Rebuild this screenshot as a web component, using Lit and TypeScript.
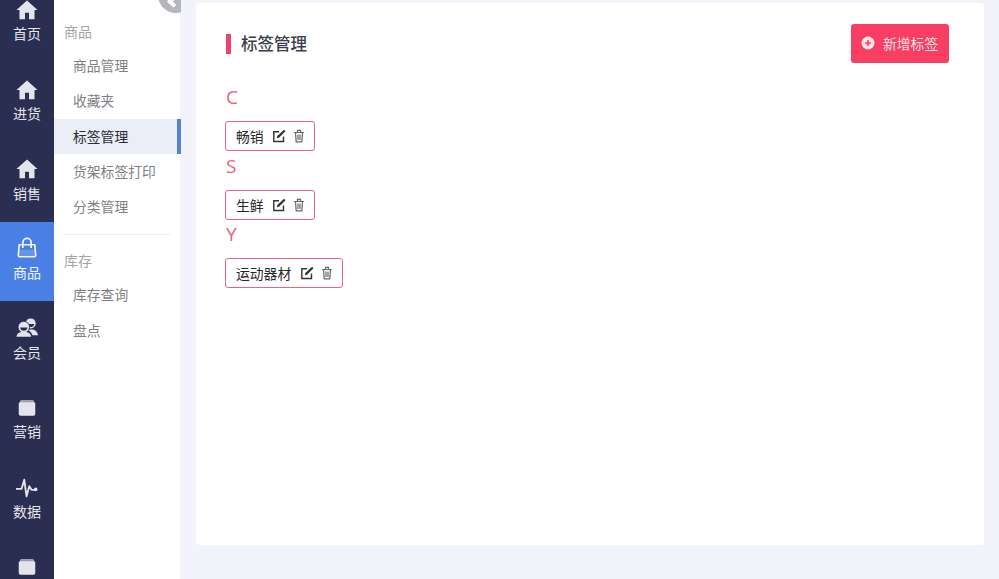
import { LitElement, html, css, svg } from "lit";
import { customElement } from "lit/decorators.js";

const FONT = css`"Noto Sans CJK SC", "Noto Sans", sans-serif`;

const home = svg`<path d="M12 1.500 .5 12h3.300V22h6v-7h4.400v7h6V12h3.300z"/>`;
const bag = svg`<path fill="currentColor" opacity=".18" d="M3 14h18v7H3z"/><path fill="none" stroke="currentColor" stroke-width="1.800" stroke-linejoin="round" d="M3.500 8.500h17l1 11.500a1.500 1.500 0 0 1-1.500 1.500H4A1.500 1.500 0 0 1 2.500 20z"/><path fill="none" stroke="currentColor" stroke-width="1.800" d="M7.500 12V6a4.500 4.500 0 0 1 9 0v6"/>`;
const members = svg`<circle cx="16" cy="7" r="5.500"/><path fill="#2a2f52" d="M12.200 7.500h7.600c-.3 2.500-2 3.500-3.800 3.500s-3.500-1-3.800-3.500z"/><path d="M17 13.500c3.500 0 6.500 2 7 6.500h-6c-1-3-3-4.500-5-5.500 1-.7 2.500-1 4-1z"/><circle cx="8.500" cy="11" r="6.300" stroke="#2a2f52" stroke-width="1"/><path fill="#2a2f52" d="M4.500 11.500h8c-.3 2.500-2.200 3.500-4 3.500s-3.700-1-4-3.500z"/><path d="M.5 21.500c.5-4 3.500-5.500 8-5.500s7.500 1.500 8 5.500z"/>`;
const box = svg`<path d="M5.500 3.500h13l2.500 3.500v11.500a2 2 0 0 1-2 2H5a2 2 0 0 1-2-2V7z"/><path fill="#9c9dac" d="M5.500 3.500h13l1.500 2.200H4z"/>`;
const pulse = svg`<path fill="none" stroke="currentColor" stroke-width="2" stroke-linecap="round" stroke-linejoin="round" d="M.5 13H6L9 3l2.500 18L14.500 10l2.500 4h3"/><circle cx="21.500" cy="13.500" r="2"/>`;

interface RailItem { label: string; icon: unknown; active?: boolean }
const rail: RailItem[] = [
  { label: "首页", icon: home },
  { label: "进货", icon: home },
  { label: "销售", icon: home },
  { label: "商品", icon: bag, active: true },
  { label: "会员", icon: members },
  { label: "营销", icon: box },
  { label: "数据", icon: pulse },
  { label: "", icon: box },
];

const tags = [
  { letter: "C", name: "畅销" },
  { letter: "S", name: "生鲜" },
  { letter: "Y", name: "运动器材" },
];

@customElement("app-root")
export class AppRoot extends LitElement {
  static styles = css`
    :host { display: block; width: 999px; height: 579px; overflow: hidden; background: #f3f4fb; font-family: ${FONT}; }
    .page { display: flex; height: 579px; overflow: hidden; }
    .rail { width: 54px; flex: none; background: #2a2f52; overflow: hidden; }
    .rail-list { margin-top: -17px; display: flex; flex-direction: column; }
    .rail-item { height: 79.6px; flex: none; display: flex; flex-direction: column; align-items: center; justify-content: flex-start; padding-top: 16px; box-sizing: border-box; color: #e4e5ec; font-size: 14px; line-height: 20px; }
    .rail-item.active { background: #4a7fe6; color: #f2f5fd; }
    .rail-item svg { width: 22px; height: 22px; fill: currentColor; display: block; margin-bottom: 2.400px; }
    .rail-item.active svg { margin-top: -1px; margin-bottom: 3.400px; }
    .sub { width: 126px; flex: none; background: #fff; position: relative; padding-top: 20px; box-sizing: border-box; }
    .knob { position: absolute; left: 104px; top: 0; width: 23px; height: 14px; overflow: hidden; }
    .knob::before { content: ""; position: absolute; left: 0; top: -23px; width: 36px; height: 36px; border-radius: 50%; background: #b5b5bd; }
    .knob::after { content: ""; position: absolute; left: 11px; top: -3px; width: 9px; height: 9px; border-left: 4px solid #fff; border-top: 4px solid #fff; transform: rotate(-45deg); box-sizing: border-box; }
    .group { font-size: 14px; line-height: 22px; color: #a3a3a8; padding-left: 10px; margin-bottom: 6px; }
    .group.second { margin-top: 14px; }
    .link { height: 35.3px; line-height: 35.3px; font-size: 13.800px; color: #7f7f84; padding-left: 19px; box-sizing: border-box; }
    .link.active { color: #2c2c33; background: #ebeef6; border-right: 4px solid #5580dc; margin-right: -1px; }
    .sep { height: 1px; background: #ececf2; margin: 10px 9px 0 10px; }
    .main { flex: 1; min-width: 0; padding: 3px 15px 34px 16px; box-sizing: border-box; display: flex; }
    .card { flex: 1; background: #fff; border-radius: 4px; padding: 21px 35px 0 30px; box-sizing: border-box; }
    .head { display: flex; justify-content: space-between; align-items: center; height: 39px; }
    .title { display: flex; align-items: center; gap: 10px; font-size: 16.500px; font-weight: 500; color: #3c3d4c; }
    .title::before { content: ""; width: 5px; height: 20px; background: #f0416c; }
    .title span { margin-top: -2px; }
    .add { display: flex; align-items: center; gap: 8px; width: 98px; height: 39px; box-sizing: border-box; padding: 0 0 1px 10px; background: #f83f63; border-radius: 3px; color: #fbdfe4; font-size: 13.800px; }
    .add span { margin-top: -1px; }
    .add svg { width: 14px; height: 14px; flex: none; }
    .list { margin-top: 22px; }
    .letter { font-family: "Open Sans", sans-serif; font-size: 19px; line-height: 24px; color: #ec6079; height: 24px; }
    .row { height: 44.500px; }
    .tag { display: inline-flex; align-items: center; height: 30px; box-sizing: border-box; margin: 12px 0 0 -1px; padding: 0 8px 0 10px; border: 1px solid #e6648a; border-radius: 3px; font-size: 13.800px; color: #26262b; vertical-align: top; }
    .tag svg { width: 14px; height: 14px; flex: none; }
    .tag .edit { margin-left: 8.500px; }
    .tag .trash { margin-left: 6px; }
  `;

  render() {
    return html`<div class="page">
      <nav class="rail"><div class="rail-list">
        ${rail.map((r) => html`<div class="rail-item ${r.active ? "active" : ""}">
          <svg viewBox="0 0 24 24">${r.icon}</svg>${r.label ? html`<span>${r.label}</span>` : ""}</div>`)}
      </div></nav>
      <aside class="sub">
        <div class="knob"></div>
        <div class="group">商品</div>
        <div class="link">商品管理</div>
        <div class="link">收藏夹</div>
        <div class="link active">标签管理</div>
        <div class="link">货架标签打印</div>
        <div class="link">分类管理</div>
        <div class="sep"></div>
        <div class="group second">库存</div>
        <div class="link">库存查询</div>
        <div class="link">盘点</div>
      </aside>
      <main class="main"><section class="card">
        <header class="head">
          <div class="title"><span>标签管理</span></div>
          <div class="add">
            <svg viewBox="0 0 14 14"><circle cx="7" cy="7" r="6.500" fill="#fbe3e8"/><path d="M4 7h6M7 4v6" stroke="#f83f63" stroke-width="1.500"/></svg>
            <span>新增标签</span>
          </div>
        </header>
        <div class="list">
          ${tags.map((t) => html`<div class="letter">${t.letter}</div>
            <div class="row">
              <div class="tag"><span>${t.name}</span>
                <svg class="edit" viewBox="0 0 14 14"><path fill="none" stroke="#333" stroke-width="1.400" d="M11.500 7.500V12.500H1.800V2.800H7"/><path fill="#333" d="M12 .8 13.500 2.300 7 8.800 4.800 9.300 5.300 7.100z"/></svg>
                <svg class="trash" viewBox="0 0 14 14"><path fill="none" stroke="#666" stroke-width="1.200" d="M3.500 4 4.200 12.800h5.600L10.500 4M2.200 3.500h9.600M5.500 3V1.300h3V3M6 5.500v5.500M8 5.500v5.500"/></svg>
              </div></div>`)}
        </div>
      </section></main>
    </div>`;
  }
}
